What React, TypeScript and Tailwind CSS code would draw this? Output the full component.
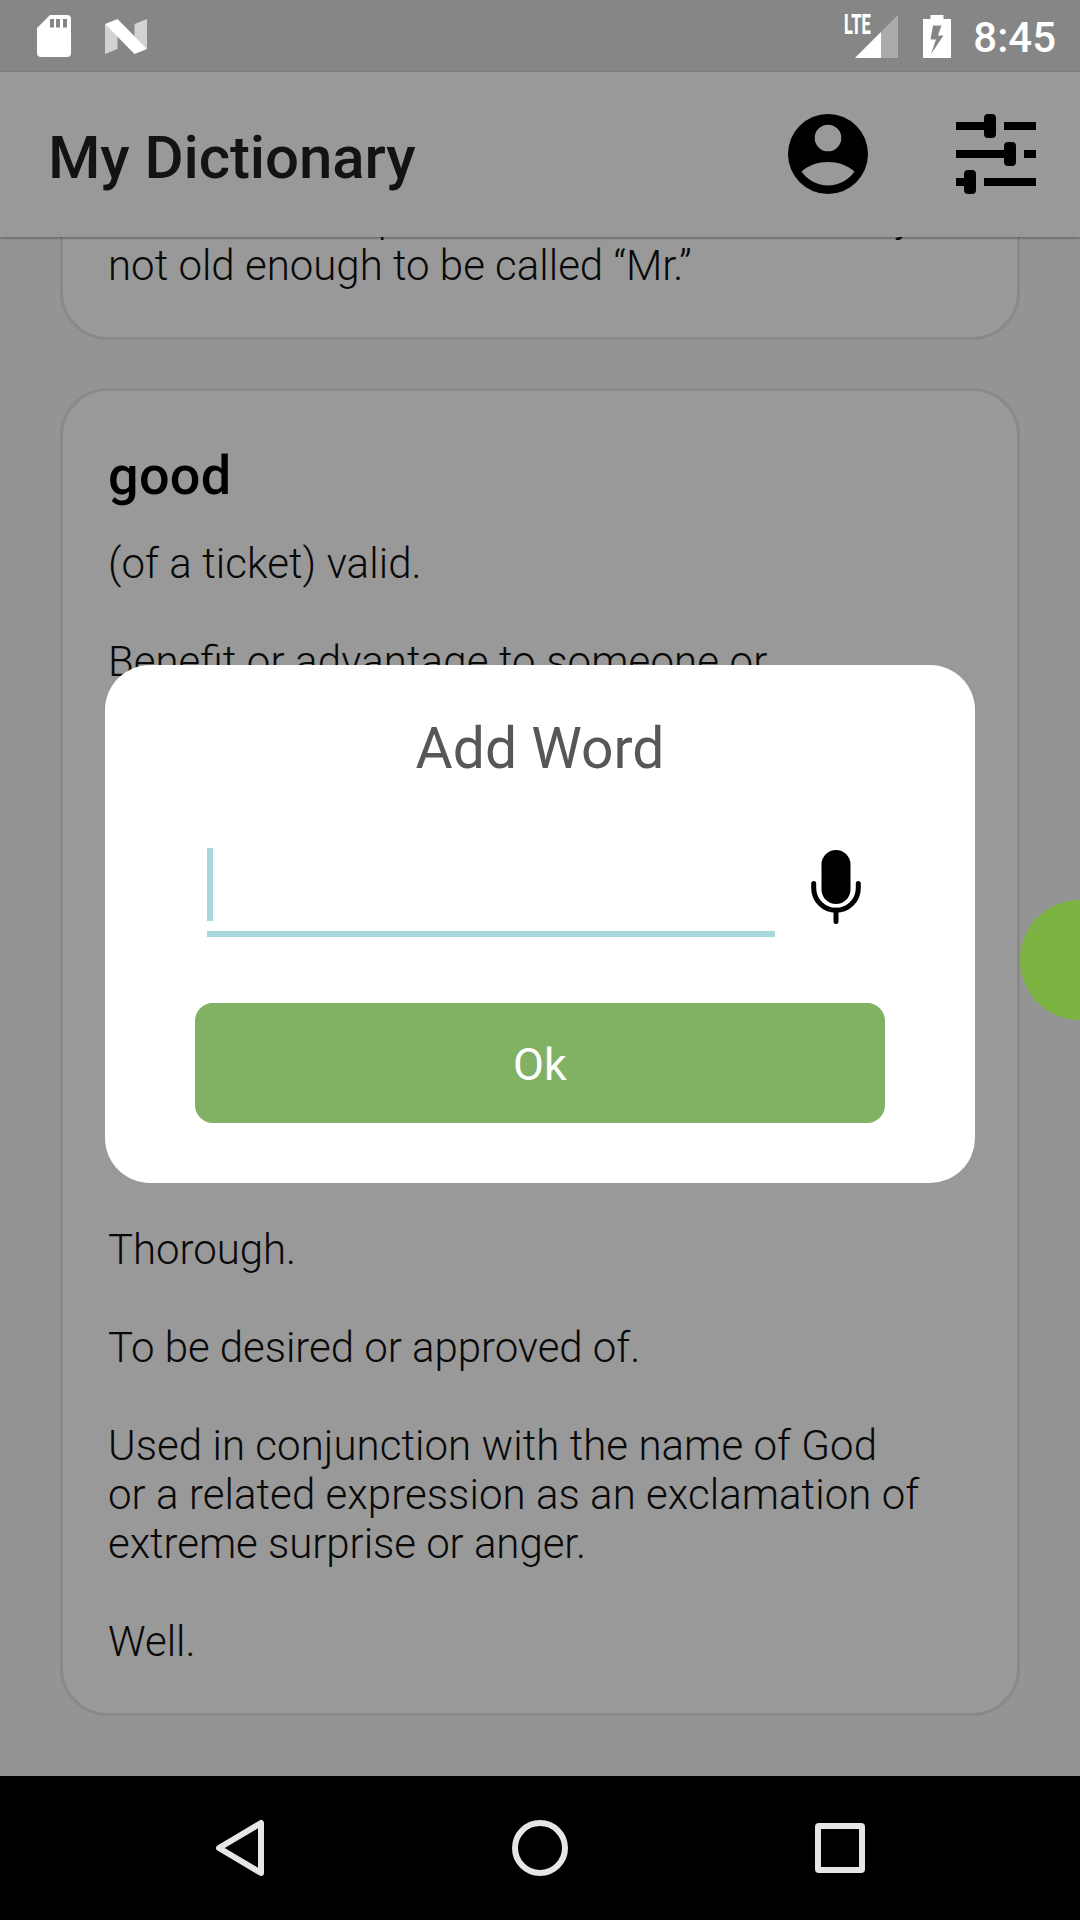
import React from "react";

const definitionText =
  "whitespace-pre-line text-[42px] leading-[49px] font-light text-[#090909]";

function StatusBar() {
  return (
    <div className="flex h-[72px] shrink-0 items-center justify-between bg-[#868686] pr-[24px] pl-[37px] text-white">
      <div className="flex items-center gap-[34px]">
        <svg width="34" height="42" viewBox="0 0 34 42">
          <path
            fill="#fff"
            fillRule="evenodd"
            d="M13 0H30a4 4 0 0 1 4 4V38a4 4 0 0 1-4 4H4a4 4 0 0 1-4-4V13ZM13 4V12.500H17V4ZM19 4V12.500H23V4ZM26 4V12.500H30V4Z"
          />
        </svg>
        <svg width="42" height="35" viewBox="0 0 42 35">
          <path fill="#d2d2d2" d="M0 5V35L12.500 30V17ZM29.500 5L42 0V30L29.500 18Z" />
          <path fill="#fff" d="M0 5L12.500 0L42 30L29.500 35Z" />
        </svg>
      </div>
      <div className="flex items-center">
        <div className="relative mr-[25px] h-[43px] w-[53px]">
          <span className="absolute top-0 left-[-1px] origin-left scale-x-[0.61] text-[27px] leading-[20px] font-extrabold">
            LTE
          </span>
          <svg className="absolute right-0 bottom-0" width="43" height="43" viewBox="0 0 43 43">
            <path fill="#ababab" d="M43 0V43H0Z" />
            <path fill="#fff" d="M26 17V43H0Z" />
          </svg>
        </div>
        <svg width="28" height="43" viewBox="0 0 28 43">
          <path
            fill="#fff"
            fillRule="evenodd"
            d="M7.500 0H20.500V4H28V43H0V4H7.500ZM10 10.500L7.500 24.500H13L8 39L20.500 20.500H15L18.500 10.500Z"
          />
        </svg>
        <span className="ml-[22px] pt-[2px] text-[42px] leading-[49px] font-medium">8:45</span>
      </div>
    </div>
  );
}

function AccountIcon() {
  return (
    <svg width="96" height="96" viewBox="0 0 96 96">
      <path
        fillRule="evenodd"
        d="M48 8a40 40 0 1 0 0 80a40 40 0 1 0 0-80ZM48 18.700a13.300 13.300 0 1 1 0 26.600a13.300 13.300 0 1 1 0-26.600ZM21.500 65.500C29 59 38 56 48 56S67 59 74.500 65.500A32 32 0 0 1 21.500 65.500Z"
      />
    </svg>
  );
}

function SlidersIcon() {
  return (
    <svg width="80" height="80" viewBox="0 0 80 80">
      <path d="M0 8h30v8H0ZM48 8h32v8H48ZM0 36h50v8H0ZM68 36h12v8H68ZM0 64h10v8H0ZM28 64h52v8H28Z" />
      <rect x="28" y="0" width="12" height="24" rx="4" />
      <rect x="48" y="28" width="12" height="24" rx="4" />
      <rect x="8" y="56" width="12" height="24" rx="4" />
    </svg>
  );
}

function Header() {
  return (
    <header className="relative z-10 flex h-[165px] shrink-0 items-start justify-between bg-[#999999] pr-[44px] pl-[48px] shadow-[0_1px_3px_rgba(0,0,0,0.4)]">
      <h1 className="mt-[51px] text-[60px] leading-[70px] font-medium tracking-[-0.1px] text-[#131313]">
        My Dictionary
      </h1>
      <div className="mt-[34px] flex items-center gap-[80px]">
        <AccountIcon />
        <SlidersIcon />
      </div>
    </header>
  );
}

function Card({ children }: { children: React.ReactNode }) {
  return (
    <section className="shrink-0 rounded-[48px] border-3 border-[#898989] bg-[#999999] px-[45px] pb-[47px]">
      {children}
    </section>
  );
}

function AddWordDialog() {
  return (
    <div className="absolute top-[665px] left-[105px] flex h-[518px] w-[870px] flex-col rounded-[45px] bg-white px-[90px] pt-[51px] pb-[60px]">
      <h2 className="text-center text-[57px] leading-[66px] text-[#575757]">Add Word</h2>
      <div className="mt-[66px] flex items-start pl-[12px]">
        <div className="h-[89px] w-[568px] border-b-6 border-[#a8dadc]">
          <div className="h-[73px] w-[6px] bg-[#a8dadc]" />
        </div>
        <svg className="mt-[2px] ml-[36px]" width="50" height="74" viewBox="0 0 50 74">
          <rect x="10.500" y="0" width="29" height="54" rx="14.500" />
          <path
            d="M2.700 33.500V38a22.300 22.300 0 0 0 44.600 0V33.500M25 60V71.500"
            fill="none"
            stroke="#000"
            strokeWidth="5"
            strokeLinecap="round"
          />
        </svg>
      </div>
      <button className="mt-auto h-[120px] rounded-[18px] bg-[#81b163] pt-[4px] text-[45px] text-white">
        Ok
      </button>
    </div>
  );
}

function NavBar() {
  return (
    <nav className="flex h-[144px] shrink-0 items-center justify-between bg-black pr-[212px] pl-[213px]">
      <svg width="54" height="60" viewBox="0 0 54 60" fill="none" stroke="#e6e6e6" strokeWidth="6" strokeLinejoin="round">
        <path d="M48 5V55L6 30Z" />
      </svg>
      <svg width="60" height="60" viewBox="0 0 60 60" fill="none" stroke="#e6e6e6" strokeWidth="6">
        <circle cx="30" cy="30" r="25" />
      </svg>
      <svg width="56" height="56" viewBox="0 0 56 56" fill="none" stroke="#e6e6e6" strokeWidth="6">
        <rect x="6" y="6" width="44" height="44" rx="1" />
      </svg>
    </nav>
  );
}

export default function App() {
  return (
    <div className="relative flex h-[1920px] w-[1080px] flex-col overflow-hidden bg-[#949494] font-['Roboto',sans-serif]">
      <StatusBar />
      <Header />
      <main className="flex min-h-0 flex-1 flex-col justify-end gap-[48px] overflow-hidden px-[60px] pb-[60px]">
        <Card>
          <p className={definitionText}>
            <span className="tracking-[0.05px]">{"Used as a title prefixed to the name of a boy\n"}</span>
            not old enough to be called “M<span className="tracking-[-0.7px]">r.”</span>
          </p>
        </Card>
        <Card>
          <h2 className="mt-[53px] mb-[32px] text-[54px] leading-[63px] font-medium tracking-[0.3px] text-black">
            good
          </h2>
          <p className={definitionText}>
            <span className="tracking-[0.06px]">{"(of a ticket) valid.\n\n"}</span>
            Benefit
            <span className="tracking-[0.12px]"> or advantage to someone or</span>
          </p>
          <p className={`mt-[539px] ${definitionText}`}>
            <span className="tracking-[-0.05px]">
              {"Thorough.\n\nTo be desired or approved of.\n\n"}
            </span>
            <span className="tracking-[0.05px]">
              {"Used in conjunction with the name of God\nor a related expression as an exclamation of\n"}
            </span>
            <span className="tracking-[-0.05px]">{"extreme surprise or anger.\n\nWell."}</span>
          </p>
        </Card>
      </main>
      <NavBar />
      <button className="absolute top-[900px] left-[1020px] size-[120px] rounded-full bg-[#7cb342]" aria-label="Add" />
      <AddWordDialog />
    </div>
  );
}
